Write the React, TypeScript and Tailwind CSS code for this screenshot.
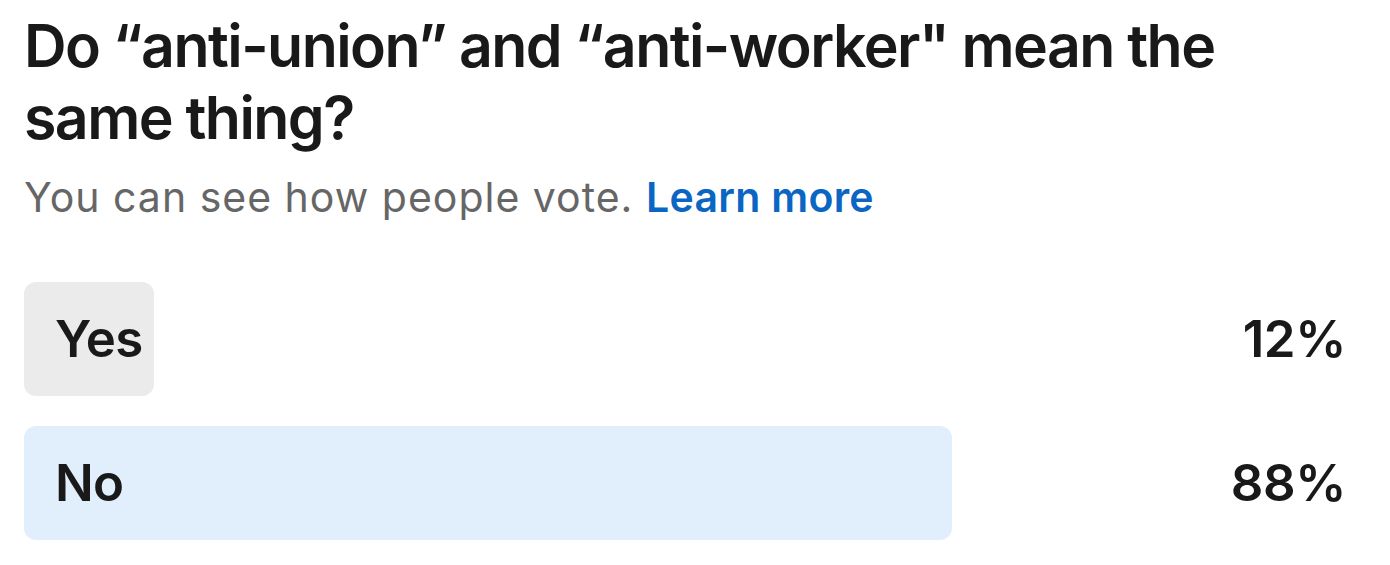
const options = [
  { label: "Yes", percent: 12, width: "w-[130px]", bg: "bg-[#ebebeb]" },
  { label: "No", percent: 88, width: "w-[928px]", bg: "bg-[#e1effc]" },
];

export default function App() {
  return (
    <div
      className="min-h-screen bg-white pl-6 pr-[44px] pt-[10px] text-[#191919]"
      style={{ fontFamily: "Inter, 'Noto Sans', sans-serif" }}
    >
      <h2 className="text-[59px] font-semibold leading-[72px] tracking-[-1.55px]">
        Do “anti-union” and “anti-worker" mean the
        <br />
        same thing?
      </h2>
      <p className="mt-[15px] text-[41px] leading-[56px] tracking-[1px] text-[#666666]">
        You can see how people vote.{" "}
        <a href="#" className="font-semibold tracking-[0.3px] text-[#0a66c2]">
          Learn more
        </a>
      </p>

      <ul className="mt-[57px] flex flex-col gap-[30px]">
        {options.map((option) => (
          <li key={option.label} className="flex items-center justify-between">
            <div
              className={`flex h-[114px] items-center rounded-xl pl-[31px] ${option.width} ${option.bg}`}
            >
              <span className="text-[51px] font-semibold tracking-[-0.6px]">
                {option.label}
              </span>
            </div>
            <span className="text-[51px] font-semibold tracking-[-0.4px]">
              {option.percent}%
            </span>
          </li>
        ))}
      </ul>
    </div>
  );
}
